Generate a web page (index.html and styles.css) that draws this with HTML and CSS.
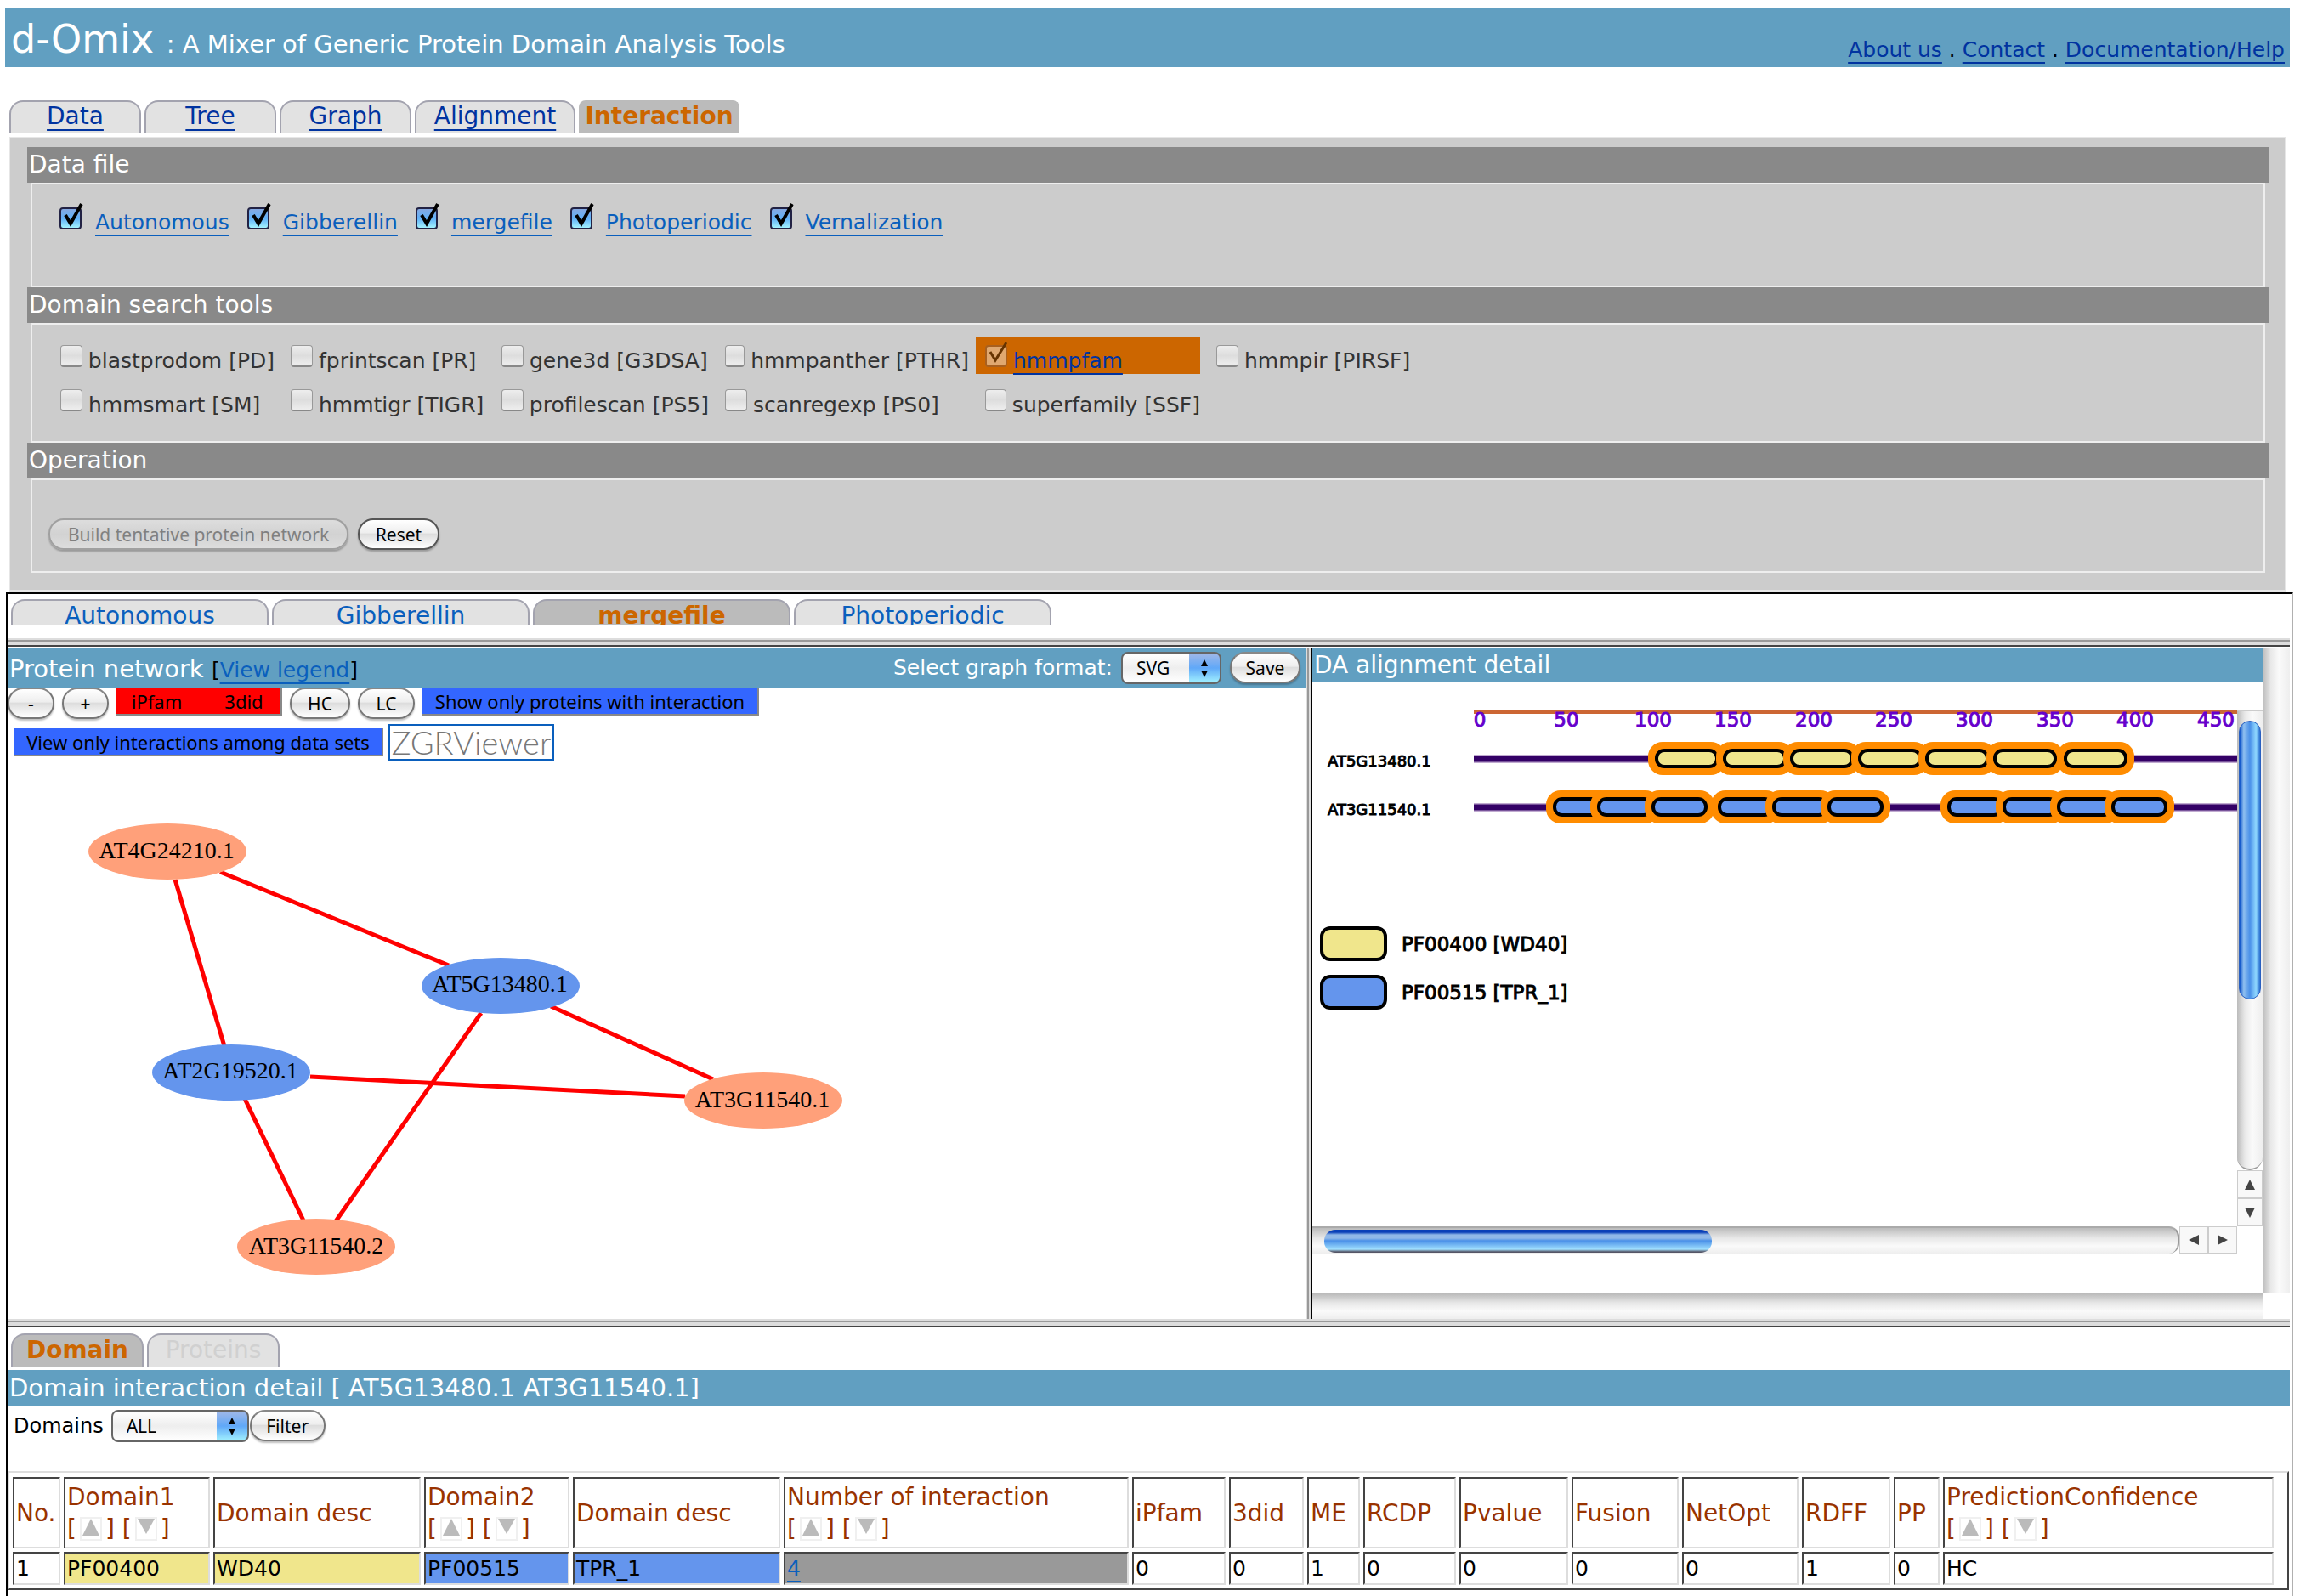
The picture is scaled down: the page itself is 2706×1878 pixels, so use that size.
FILE: index.html
```html
<!DOCTYPE html>
<html lang="en">
<head>
<meta charset="utf-8">
<title>d-Omix</title>
<link rel="stylesheet" href="styles.css">
</head>
<body>
<header class="banner">
  <h1 class="brand">d-Omix <small>: A Mixer of Generic Protein Domain Analysis Tools</small></h1>
  <nav class="links"><a href="#">About us</a> . <a href="#">Contact</a> . <a href="#">Documentation/Help</a></nav>
</header>

<nav class="tabs main-tabs">
  <a href="#" class="tab">Data</a>
  <a href="#" class="tab">Tree</a>
  <a href="#" class="tab">Graph</a>
  <a href="#" class="tab wide">Alignment</a>
  <a href="#" class="tab wide active">Interaction</a>
</nav>

<form class="panel">
  <h2 class="bar">Data file</h2>
  <div class="box files">
    <span class="file"><input type="checkbox" id="f1" checked><label for="f1"><a href="#">Autonomous</a></label></span>
    <span class="file"><input type="checkbox" id="f2" checked><label for="f2"><a href="#">Gibberellin</a></label></span>
    <span class="file"><input type="checkbox" id="f3" checked><label for="f3"><a href="#">mergefile</a></label></span>
    <span class="file"><input type="checkbox" id="f4" checked><label for="f4"><a href="#">Photoperiodic</a></label></span>
    <span class="file"><input type="checkbox" id="f5" checked><label for="f5"><a href="#">Vernalization</a></label></span>
  </div>
  <h2 class="bar">Domain search tools</h2>
  <div class="box tools">
    <span class="tool"><input type="checkbox" id="t1"><label for="t1">blastprodom [PD]</label></span>
    <span class="tool"><input type="checkbox" id="t2"><label for="t2">fprintscan [PR]</label></span>
    <span class="tool"><input type="checkbox" id="t3"><label for="t3">gene3d [G3DSA]</label></span>
    <span class="tool"><input type="checkbox" id="t4"><label for="t4">hmmpanther [PTHR]</label></span>
    <span class="tool chosen"><input type="checkbox" id="t5" checked><label for="t5"><a href="#">hmmpfam</a></label></span>
    <span class="tool"><input type="checkbox" id="t6"><label for="t6">hmmpir [PIRSF]</label></span>
    <span class="tool"><input type="checkbox" id="t7"><label for="t7">hmmsmart [SM]</label></span>
    <span class="tool"><input type="checkbox" id="t8"><label for="t8">hmmtigr [TIGR]</label></span>
    <span class="tool"><input type="checkbox" id="t9"><label for="t9">profilescan [PS5]</label></span>
    <span class="tool"><input type="checkbox" id="t10"><label for="t10">scanregexp [PS0]</label></span>
    <span class="tool"><input type="checkbox" id="t11"><label for="t11">superfamily [SSF]</label></span>
  </div>
  <h2 class="bar">Operation</h2>
  <div class="box operation">
    <button type="button" class="aqua build" disabled>Build tentative protein network</button>
    <button type="reset" class="aqua reset">Reset</button>
  </div>
</form>

<main class="frame">
  <nav class="tabs set-tabs">
    <a href="#" class="tab">Autonomous</a>
    <a href="#" class="tab">Gibberellin</a>
    <a href="#" class="tab active">mergefile</a>
    <a href="#" class="tab">Photoperiodic</a>
  </nav>
  <div class="divider"></div>

  <div class="panes">
    <section class="network">
      <div class="blue network-head">
        <h2>Protein network <span class="legend-link">[<a href="#">View legend</a>]</span></h2>
        <div class="format">
          <label for="format">Select graph format:</label>
          <select id="format" class="popup short"><option>SVG</option></select>
          <button type="button" class="aqua save">Save</button>
        </div>
      </div>
      <div class="toolbar">
        <button type="button" class="aqua minus">-</button>
        <button type="button" class="aqua plus">+</button>
        <span class="pair"><button type="button" class="flat red ipfam">iPfam</button><button type="button" class="flat red did">3did</button></span>
        <button type="button" class="aqua hc">HC</button>
        <button type="button" class="aqua lc">LC</button>
        <button type="button" class="flat blueflat only">Show only proteins with interaction</button>
      </div>
      <div class="toolbar second">
        <button type="button" class="flat blueflat among">View only interactions among data sets</button>
        <a href="#" class="zgr">ZGRViewer</a>
      </div>
      <svg class="graph" width="1000" height="652" viewBox="9 900 1000 652">
        <g stroke="#f00" stroke-width="5">
          <path d="M206 1035L264 1231"/>
          <path d="M259 1026L528 1136"/>
          <path d="M648 1184L839 1270"/>
          <path d="M365 1267L806 1290"/>
          <path d="M288 1293L357 1436"/>
          <path d="M566 1192L395 1437"/>
        </g>
        <g fill="#ffa07a">
          <ellipse cx="197" cy="1002" rx="93" ry="33"/>
          <ellipse cx="898" cy="1295" rx="93" ry="33"/>
          <ellipse cx="372" cy="1467" rx="93" ry="33"/>
        </g>
        <g fill="#6495ed">
          <ellipse cx="589" cy="1160" rx="93" ry="33"/>
          <ellipse cx="272" cy="1262" rx="93" ry="33"/>
        </g>
        <g class="node-text" text-anchor="middle">
          <text x="196" y="1010">AT4G24210.1</text>
          <text x="588" y="1167">AT5G13480.1</text>
          <text x="271" y="1269">AT2G19520.1</text>
          <text x="897" y="1303">AT3G11540.1</text>
          <text x="372" y="1475">AT3G11540.2</text>
        </g>
      </svg>
    </section>
    <div class="splitter"></div>
    <section class="detail">
      <div class="detail-main">
        <h2 class="blue detail-head">DA alignment detail</h2>
        <div class="viewer">
          <div class="canvas">
            <svg width="1400" height="607" viewBox="1544 836 1400 607">
              <defs>
                <g id="wd"><rect x="-8" y="873" width="91" height="39" rx="17" fill="#ff8c00"/><rect x="2" y="883" width="71" height="19" rx="9" fill="#f0e68c" stroke="#000" stroke-width="4"/></g>
                <g id="tpr"><rect x="-8" y="930" width="82" height="39" rx="17" fill="#ff8c00"/><rect x="2" y="940" width="62" height="19" rx="9" fill="#6495ed" stroke="#000" stroke-width="4"/></g>
              </defs>
              <path d="M1734 838H2944" stroke="#cc6633" stroke-width="4"/>
              <g class="ruler" text-anchor="middle">
                <text x="1741" y="855">0</text><text x="1843" y="855">50</text><text x="1945" y="855">100</text><text x="2039" y="855">150</text><text x="2134" y="855">200</text><text x="2228" y="855">250</text><text x="2323" y="855">300</text><text x="2418" y="855">350</text><text x="2512" y="855">400</text><text x="2607" y="855">450</text>
              </g>
              <path d="M1734 893H2944M1734 950H2944" stroke="#c0aad0" stroke-width="10"/>
              <path d="M1734 893H2944M1734 950H2944" stroke="#330066" stroke-width="7"/>
              <g class="seq"><text x="1562" y="902">AT5G13480.1</text><text x="1562" y="959">AT3G11540.1</text></g>
              <use href="#wd" x="1947"/><use href="#wd" x="2027"/><use href="#wd" x="2106"/><use href="#wd" x="2186"/><use href="#wd" x="2265"/><use href="#wd" x="2345"/><use href="#wd" x="2428"/>
              <use href="#tpr" x="1827"/><use href="#tpr" x="1879"/><use href="#tpr" x="1943"/><use href="#tpr" x="2021"/><use href="#tpr" x="2085"/><use href="#tpr" x="2150"/><use href="#tpr" x="2291"/><use href="#tpr" x="2356"/><use href="#tpr" x="2420"/><use href="#tpr" x="2484"/>
              <g stroke="#000" stroke-width="4">
                <rect x="1555" y="1092" width="75" height="37" rx="10" fill="#f0e68c"/>
                <rect x="1555" y="1149" width="75" height="37" rx="10" fill="#6495ed"/>
              </g>
              <g class="key"><text x="1649" y="1119">PF00400 [WD40]</text><text x="1649" y="1176">PF00515 [TPR_1]</text></g>
            </svg>
          </div>
          <div class="vbar"><span class="vtrack"><span class="vthumb"></span></span><span class="arrow"><svg width="14" height="14"><path d="M7 1L13 13H1z" fill="#444"/></svg></span><span class="arrow"><svg width="14" height="14"><path d="M7 13L13 1H1z" fill="#444"/></svg></span></div>
          <div class="hbar"><span class="htrack"><span class="hthumb"></span></span><span class="arrow"><svg width="14" height="14"><path d="M1 7L13 1V13z" fill="#444"/></svg></span><span class="arrow"><svg width="14" height="14"><path d="M13 7L1 1V13z" fill="#444"/></svg></span></div>
        </div>
      </div>
      <div class="empty-v"></div>
      <div class="empty-h"></div>
    </section>
  </div>
  <div class="divider"></div>

  <nav class="tabs detail-tabs">
    <a href="#" class="tab active">Domain</a>
    <a href="#" class="tab off">Proteins</a>
  </nav>
  <h2 class="blue table-head">Domain interaction detail [ AT5G13480.1 AT3G11540.1]</h2>
  <form class="filter">
    <label for="domains">Domains</label>
    <select id="domains" class="popup long"><option>ALL</option></select>
    <button type="button" class="aqua filter-btn">Filter</button>
  </form>
  <div class="table-box">
    <table>
      <colgroup><col class="w56"><col class="w172"><col class="w244"><col class="w171"><col class="w244"><col class="w406"><col class="w110"><col class="w88"><col class="w62"><col class="w109"><col class="w128"><col class="w126"><col class="w137"><col class="w104"><col class="w54"><col></colgroup>
      <thead>
        <tr>
          <th>No.</th>
          <th>Domain1<br><span class="sort">[<button type="button" aria-label="Sort up"><svg width="20" height="20"><path d="M10 0L20 20H0z" fill="#bbb"/></svg></button>] [<button type="button" aria-label="Sort down"><svg width="20" height="20"><path d="M10 18L20 0H0z" fill="#bbb"/></svg></button>]</span></th>
          <th>Domain desc</th>
          <th>Domain2<br><span class="sort">[<button type="button" aria-label="Sort up"><svg width="20" height="20"><path d="M10 0L20 20H0z" fill="#bbb"/></svg></button>] [<button type="button" aria-label="Sort down"><svg width="20" height="20"><path d="M10 18L20 0H0z" fill="#bbb"/></svg></button>]</span></th>
          <th>Domain desc</th>
          <th>Number of interaction<br><span class="sort">[<button type="button" aria-label="Sort up"><svg width="20" height="20"><path d="M10 0L20 20H0z" fill="#bbb"/></svg></button>] [<button type="button" aria-label="Sort down"><svg width="20" height="20"><path d="M10 18L20 0H0z" fill="#bbb"/></svg></button>]</span></th>
          <th>iPfam</th><th>3did</th><th>ME</th><th>RCDP</th><th>Pvalue</th><th>Fusion</th><th>NetOpt</th><th>RDFF</th><th>PP</th>
          <th>PredictionConfidence<br><span class="sort">[<button type="button" aria-label="Sort up"><svg width="20" height="20"><path d="M10 0L20 20H0z" fill="#bbb"/></svg></button>] [<button type="button" aria-label="Sort down"><svg width="20" height="20"><path d="M10 18L20 0H0z" fill="#bbb"/></svg></button>]</span></th>
        </tr>
      </thead>
      <tbody>
        <tr>
          <td>1</td><td class="khaki">PF00400</td><td class="khaki">WD40</td><td class="corn">PF00515</td><td class="corn">TPR_1</td><td class="grey"><a href="#">4</a></td><td>0</td><td>0</td><td>1</td><td>0</td><td>0</td><td>0</td><td>0</td><td>1</td><td>0</td><td>HC</td>
        </tr>
      </tbody>
    </table>
  </div>
</main>
</body>
</html>
```
FILE: styles.css
```css
* { box-sizing: border-box; }

body {
  margin: 0;
  padding: 10px 8px 0 6px;
  min-height: 100vh;
  display: flex;
  flex-direction: column;
  background: #fff;
  color: #000;
  font-family: "DejaVu Sans", Verdana, sans-serif;
  font-size: 25px;
}

h1, h2 { margin: 0; font-weight: 400; }
h2 { font-size: 28px; }

a {
  color: #0a5fbd;
  text-decoration-thickness: 2px;
  text-underline-offset: 6px;
  text-decoration-skip-ink: none;
}

.banner {
  display: flex;
  justify-content: space-between;
  height: 69px;
  margin-right: 4px;
  padding: 0 6px 0 7px;
  background: #619fc1;
  color: #fff;
}
.brand { font-size: 46px; line-height: 72px; }
.brand small { font-size: 29px; }
.links { color: #000; line-height: 98px; }
.links a, .main-tabs .tab { color: #0033a0; }

.tabs { display: flex; gap: 4px; }
.tab {
  border: 2px solid #a3a3af;
  border-bottom: 0;
  border-radius: 16px 16px 0 0;
  background: #e2e2e2;
  text-align: center;
  font-size: 28px;
  line-height: 36px;
}
.tab.active {
  background: #bbb;
  color: #cc6600;
  font-weight: 700;
  text-decoration: none;
}
.main-tabs { margin: 39px 0 5px 5px; }
.main-tabs .tab { width: 155px; height: 38px; line-height: 34px; }
.main-tabs .wide { width: 189px; }
.main-tabs .active { border-color: #bbb; border-radius: 8px 8px 0 0; color: #cc6600; }

.panel {
  margin: 0 9px 0 5px;
  padding: 11px 19px 20px 20px;
  border: 1px solid #e6e6e6;
  border-bottom-width: 3px;
  background: #ccc;
}
.bar {
  height: 42px;
  padding-left: 2px;
  background: #898989;
  color: #fff;
  line-height: 42px;
}
.box { margin: 0 4px; border: 2px solid #eee; }
.files {
  display: flex;
  align-items: flex-start;
  gap: 21px;
  height: 123px;
  padding: 22px 32px;
}
.file { display: flex; gap: 14px; line-height: 46px; }
.tools {
  display: grid;
  grid-template-columns: 263px 240px 255px 298px 264px 300px;
  grid-auto-rows: 44px;
  gap: 8px;
  height: 141px;
  padding: 14px 22px;
  color: #333;
}
.tool { display: flex; gap: 7px; padding-left: 11px; line-height: 58px; white-space: nowrap; }
.chosen { background: #cc6600; }
.chosen a { color: #0033a0; }

input[type="checkbox"] {
  appearance: none;
  width: 26px;
  height: 26px;
  margin: 10px 0 0;
  border: 1px solid #999;
  border-bottom: 2px solid #888;
  border-radius: 4px;
  background: linear-gradient(#eee, #ddd 50%, #eee);
}
input[type="checkbox"]:checked {
  width: 28px;
  height: 32px;
  margin: 0;
  border: 0;
  background: url("data:image/svg+xml,%3Csvg xmlns='http://www.w3.org/2000/svg' width='28' height='32'%3E%3Cdefs%3E%3ClinearGradient id='g' x2='0' y2='1'%3E%3Cstop stop-color='%2388a8e0'/%3E%3Cstop offset='.5' stop-color='%2360b0f8'/%3E%3Cstop offset='1' stop-color='%23a8f8ff'/%3E%3C/linearGradient%3E%3C/defs%3E%3Crect x='1' y='6' width='24' height='24' rx='3' fill='url(%23g)' stroke='%23224' stroke-width='2'/%3E%3Cpath d='M7 14L13 24L26 1' fill='none' stroke='%23000' stroke-width='4'/%3E%3C/svg%3E") no-repeat;
}
.chosen input[type="checkbox"]:checked {
  width: 26px;
  margin-top: 5px;
  background-image: url("data:image/svg+xml,%3Csvg xmlns='http://www.w3.org/2000/svg' width='28' height='32'%3E%3Crect x='1' y='6' width='24' height='24' rx='3' fill='%23e0a870' stroke='%23a86020' stroke-width='2'/%3E%3Cpath d='M6 13L12 23L25 2' fill='none' stroke='%23663300' stroke-width='3'/%3E%3C/svg%3E");
}

.operation { display: flex; gap: 11px; height: 111px; padding: 45px 19px; }

button, select { font: 21px "Noto Sans", "Open Sans", sans-serif; color: #000; }
.aqua {
  height: 37px;
  padding: 0;
  border: 2px solid #777;
  border-top-color: #888;
  border-radius: 18px;
  background: linear-gradient(#fff, #eee 45%, #ddd 50%, #fff);
  box-shadow: 0 2px 2px rgba(0, 0, 0, .25);
  line-height: 32px;
}
.aqua:disabled { border-color: #a0a0a0; background: linear-gradient(#ddd, #d2d2d2 50%, #ddd); color: #808080; }
.build { width: 353px; }
.reset { width: 96px; border-color: #555; }
.save { width: 83px; }
.minus, .plus { width: 55px; }
.hc { width: 71px; }
.lc { width: 67px; }
.filter-btn { width: 89px; }

.popup {
  appearance: none;
  height: 38px;
  padding: 0 0 0 16px;
  border: 2px solid #666;
  border-radius: 8px;
  background:
    url("data:image/svg+xml,%3Csvg xmlns='http://www.w3.org/2000/svg' width='36' height='34'%3E%3Cpath d='M18 7L22 15H14zM18 28L22 20H14z'/%3E%3C/svg%3E") right center no-repeat,
    linear-gradient(#a0b8e8, #60a8f8 50%, #a0f0ff) right / 36px 100% no-repeat,
    linear-gradient(#fff, #eee 50%, #fff);
}
.short { width: 118px; }
.long { width: 162px; }

.frame {
  flex: 1;
  margin-left: 1px;
  padding-right: 2px;
  border: 2px solid #000;
  border-right-color: #b0b0b0;
  border-bottom: 0;
}
.set-tabs { height: 52px; padding: 6px 0 15px 4px; }
.set-tabs .tab { width: 303px; line-height: 36px; overflow: hidden; text-decoration: none; }
.divider {
  height: 10px;
  margin-bottom: 1px;
  background: linear-gradient(#ddd 2px, #999 2px 4px, #ddd 4px 8px, #444 8px);
}
.panes { display: grid; grid-template-columns: 1527fr 8px 1150fr; }
.blue { background: #619fc1; color: #fff; font-size: 29px; }
.network { overflow: hidden; }
.network-head {
  display: flex;
  justify-content: space-between;
  height: 47px;
  padding: 0 6px 0 2px;
  line-height: 50px;
}
.network-head h2 { font-size: 29px; }
.legend-link { font-size: 25px; color: #000; }
.format { display: flex; align-items: center; gap: 10px; font-size: 25px; line-height: 40px; }
.toolbar { display: flex; gap: 9px; height: 43px; }
.pair { display: flex; }
.flat { height: 33px; padding: 0; border: 0; border-right: 2px solid #888; border-bottom: 2px solid #888; font-size: 22px; line-height: 28px; white-space: nowrap; }
.red { background: #f00; border-right: 0; }
.ipfam { width: 107px; padding-right: 12px; }
.did { width: 88px; border-right: 2px solid #888; }
.blueflat { background: #3366ff; }
.only { width: 396px; }
.among { width: 434px; margin-top: 5px; }
.second { gap: 6px; padding-left: 8px; }
.zgr {
  width: 195px;
  height: 43px;
  border: 2px solid #0a5fbd;
  color: #777;
  font: 300 38px/38px Lato, sans-serif;
  text-align: center;
  text-decoration: none;
}
.graph { display: block; margin-top: 5px; }
.node-text { font: 28px "Liberation Serif", serif; }

.splitter { background: linear-gradient(90deg, #ddd 2px, #999 2px 4px, #ddd 4px 6px, #000 6px); }
.detail { display: grid; grid-template-columns: 1fr 32px; grid-template-rows: 1fr 31px; min-width: 0; }
.detail-main { min-width: 0; }
.detail-head { height: 41px; padding-left: 2px; line-height: 42px; font-size: 28px; }
.empty-v { background: linear-gradient(90deg, #bbb, #e8e8e8 30%, #fafafa 60%, #eee); }
.empty-h { background: linear-gradient(#b5b5b5, #e8e8e8 40%, #fafafa 70%, #eee); }
.viewer { display: grid; grid-template-columns: 1fr 30px; grid-template-rows: 607px 32px; margin-top: 33px; }
.canvas { overflow: hidden; }
.canvas svg { display: block; }
.ruler { font: 23px "DejaVu Sans", sans-serif; fill: #6600cc; stroke: #6600cc; stroke-width: 1px; }
.seq { font: 18px "DejaVu Sans", sans-serif; stroke: #000; stroke-width: 1px; }
.key { font: 23px "DejaVu Sans", sans-serif; stroke: #000; stroke-width: 1px; }
.vbar { display: flex; flex-direction: column; border-top: 1px solid #ccc; }
.vtrack { flex: 1; padding: 11px 2px; border-radius: 0 0 15px 15px; background: linear-gradient(90deg, #bbb, #e8e8e8 30%, #fafafa 60%, #eee); border-bottom: 2px solid #999; }
.vthumb { display: block; height: 328px; border: 1px solid #2a60c0; border-radius: 13px; background: linear-gradient(90deg, #0a50c8, #90c0f0 20%, #4a90e8 50%, #90d8ff 80%, #2a70d0); }
.arrow { display: flex; align-items: center; justify-content: center; border: 1px solid #ccc; background: #f8f8f8; }
.vbar .arrow { height: 33px; }
.hbar { display: flex; }
.htrack { flex: 1; padding: 2px 14px; border-top: 2px solid #aaa; border-right: 2px solid #999; border-radius: 0 12px 12px 0; background: linear-gradient(#bbb, #e8e8e8 40%, #fafafa 70%, #eee); }
.hthumb { display: block; width: 456px; height: 27px; border-radius: 13px; background: linear-gradient(#0a40b8 3px, #90b8e8 6px, #90b8e8 10px, #4a90e8 13px, #a0e0ff 23px, #556 26px); }
.hbar .arrow { width: 34px; }

.detail-tabs { padding: 6px 0 4px 4px; }
.detail-tabs .tab { width: 156px; height: 39px; text-decoration: none; }
.detail-tabs .off { color: #d0d0d0; }
.table-head { height: 42px; padding-left: 2px; line-height: 42px; }
.filter { display: flex; align-items: center; height: 77px; padding: 4px 0 34px 7px; font-size: 24px; }
.filter .popup { margin: 0 1px 0 9px; }

.table-box { margin-right: 1px; padding: 1px 12px 0 0; border: 2px solid #ddd; border-right-color: #444; border-bottom-color: #444; }
table { width: 100%; table-layout: fixed; border-collapse: separate; border-spacing: 4px; margin: 0; }
th, td { height: 39px; padding: 0 0 0 2px; border: 2px solid #ddd; border-top-color: #444; border-left-color: #444; text-align: left; white-space: nowrap; }
th { height: 84px; color: #993300; font-size: 28px; font-weight: 400; line-height: 37px; }
.sort { display: flex; gap: 4px; align-items: center; white-space: pre; }
.sort button { width: 26px; height: 28px; padding: 0; border: 2px solid #f0f0f0; background: #fff; line-height: 1; }
.khaki { background: #f0e68c; }
.corn { background: #6495ed; }
.grey { background: #999; }
.w56 { width: 56px; }
.w172 { width: 172px; }
.w244 { width: 244px; }
.w171 { width: 171px; }
.w406 { width: 406px; }
.w110 { width: 110px; }
.w88 { width: 88px; }
.w62 { width: 62px; }
.w109 { width: 109px; }
.w128 { width: 128px; }
.w126 { width: 126px; }
.w137 { width: 137px; }
.w104 { width: 104px; }
.w54 { width: 54px; }
```
